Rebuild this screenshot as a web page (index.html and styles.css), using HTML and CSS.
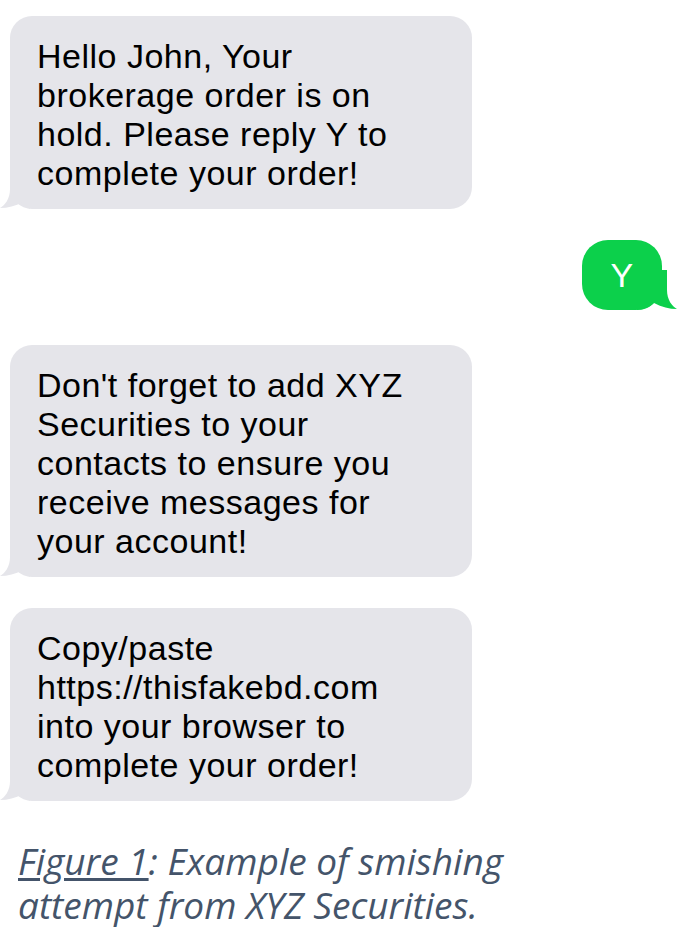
FILE: index.html
```html
<!DOCTYPE html>
<html lang="en">
<head>
  <meta charset="UTF-8">
  <title>Smishing example</title>
  <link rel="stylesheet" href="styles.css">
</head>
<body>
  <div class="chat">
    <div class="msg in">
      Hello John, Your brokerage order is on hold. Please reply Y to complete your order!
      <svg class="tail" viewBox="0 0 30 40"><path d="M10 0 L10 20 C10 30 5 36 0 39 C8 39 15 37 23 33 C26 36 28 39 30 40 L30 0 Z"/></svg>
    </div>

    <div class="msg out">
      Y
      <svg class="tail" viewBox="0 0 40 40"><path d="M10 0 L10 20 C10 30 5 36 0 39 C8 39 15 37 23 33 C27 37 32 40 40 40 L40 0 Z"/></svg>
    </div>

    <div class="msg in">
      Don't forget to add XYZ Securities to your contacts to ensure you receive messages for your account!
      <svg class="tail" viewBox="0 0 30 40"><path d="M10 0 L10 20 C10 30 5 36 0 39 C8 39 15 37 23 33 C26 36 28 39 30 40 L30 0 Z"/></svg>
    </div>

    <div class="msg in">
      Copy/paste https://thisfakebd.com into your browser to complete your order!
      <svg class="tail" viewBox="0 0 30 40"><path d="M10 0 L10 20 C10 30 5 36 0 39 C8 39 15 37 23 33 C26 36 28 39 30 40 L30 0 Z"/></svg>
    </div>
  </div>

  <p class="caption"><u>Figure 1</u>: Example of smishing attempt from XYZ Securities.</p>
</body>
</html>
```

FILE: styles.css
```css
body { margin: 0; background: #fff; font-family: "Liberation Sans", Arial, sans-serif; }
.chat { display: flex; flex-direction: column; padding-top: 16px; }
.msg { position: relative; font-size: 34px; line-height: 39px; letter-spacing: 0.5px; color: #000; }
.msg .tail { position: absolute; bottom: 0; width: 30px; height: 40px; }

.msg.in { align-self: flex-start; margin-left: 10px; width: 462px; box-sizing: border-box; padding: 21px 50px 16px 27px; background: #e5e5ea; border-radius: 22px; margin-bottom: 31px; }
.msg.in:last-child { margin-bottom: 0; }
.msg.in .tail { left: -10px; fill: #e5e5ea; }

.msg.out { align-self: flex-start; margin-left: 582px; width: 80px; height: 70px; display: flex; align-items: center; justify-content: center; background: #0cd04b; color: #fff; border-radius: 26px; margin-bottom: 35px; }
.msg.out .tail { right: -15px; width: 40px; fill: #0cd04b; transform: scaleX(-1); }

.caption { margin: 38px 0 0 18px; max-width: 520px; font-family: "Open Sans", sans-serif; font-style: italic; font-size: 37px; line-height: 44px; color: #44546a; }
.caption u { text-decoration-thickness: 3px; text-underline-offset: 3px; }
```
